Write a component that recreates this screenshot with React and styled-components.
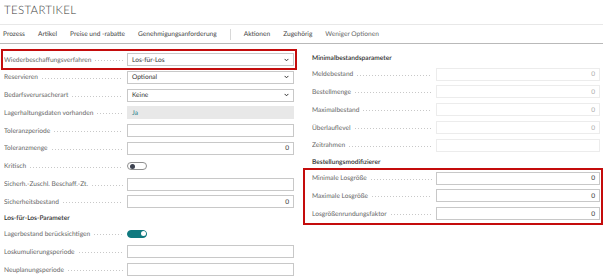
import React from 'react';
import styled, { createGlobalStyle } from 'styled-components';

const Global = createGlobalStyle`
  html, body { margin: 0; padding: 0; background: #fff; }
  body {
    font-family: Lato, "Open Sans", sans-serif;
    color: #333;
    text-rendering: geometricPrecision;
  }
  * { box-sizing: border-box; }
`;

const Page = styled.div`
  width: 605px;
  height: 280px;
  overflow: hidden;
  background: #fff;
`;

const Title = styled.h1`
  margin: 0;
  height: 24px;
  padding: 3px 0 0 4px;
  font-family: Lato, sans-serif;
  font-weight: 300;
  font-size: 11.5px;
  line-height: 15px;
  letter-spacing: 0.3px;
  color: #3a3a3a;
`;

const Nav = styled.nav`
  display: flex;
  align-items: center;
  gap: 13px;
  height: 20px;
  margin-right: 2px;
  padding-left: 3px;
  border-top: 1px solid #e8e8e8;
  border-bottom: 1px solid #b9b9b9;
`;

const NavItem = styled.span`
  font-size: 6.6px;
  color: ${p => (p.$muted ? '#666' : '#444')};
  white-space: nowrap;
`;

const NavSep = styled.span`
  width: 1px;
  height: 11px;
  background: #d8d8d8;
`;

const Columns = styled.div`
  display: grid;
  grid-template-columns: 290px 288px;
  column-gap: 18px;
  padding: 9px 5px 0 4px;
`;

const Column = styled.div`
  display: flex;
  flex-direction: column;
  gap: 4.8px;
`;

const Highlight = styled.div`
  display: flex;
  flex-direction: column;
  gap: 4.8px;
  border: 2px solid #c40c0c;
  padding: ${p => p.$pad};
  margin: ${p => p.$margin};
`;

const Heading = styled.div`
  height: ${p => p.$h}px;
  display: flex;
  align-items: flex-end;
  font-size: 6.6px;
  line-height: 8.4px;
  font-weight: 600;
  color: #2e2e2e;
  white-space: nowrap;
`;

const Row = styled.div`
  display: grid;
  grid-template-columns: ${p => p.$labelW}px 1fr;
  height: 13px;
  align-items: center;
`;

const Label = styled.div`
  display: flex;
  align-items: center;
  padding-right: 4px;
  font-size: 6.6px;
  color: #666;
  white-space: nowrap;
  overflow: hidden;
`;

const Leader = styled.span`
  flex: 1;
  height: 1px;
  margin: 2px 0 0 4px;
  background-image: linear-gradient(to right, #c8c8c8 1px, transparent 1px);
  background-size: 3px 1px;
`;

const Control = styled.div`
  display: flex;
  align-items: center;
`;

const Field = styled.div`
  flex: 1;
  height: 13px;
  display: flex;
  align-items: center;
  justify-content: ${p => (p.$num ? 'flex-end' : 'space-between')};
  padding: 0 4px;
  font-size: 6.6px;
  border: 1px solid ${p => (p.$variant === 'readonly' ? '#ececec' : p.$variant === 'filled' ? '#e8e8e8' : '#c8c8c8')};
  background: ${p => (p.$variant === 'filled' ? '#e8e8e8' : '#fff')};
  color: ${p => (p.$variant === 'readonly' ? '#aaa' : p.$variant === 'filled' ? '#1b7b85' : '#333')};
  white-space: nowrap;
`;

const Toggle = styled.span`
  position: relative;
  display: inline-block;
  width: 20px;
  height: 8px;
  border-radius: 4px;
  border: 1px solid ${p => (p.$on ? '#10797f' : '#8f8f8f')};
  background: ${p => (p.$on ? '#10797f' : '#fff')};
  &::after {
    content: '';
    position: absolute;
    top: 0.5px;
    left: ${p => (p.$on ? '12.5px' : '1.5px')};
    width: 5px;
    height: 5px;
    border-radius: 50%;
    background: ${p => (p.$on ? '#fff' : '#3d4250')};
  }
`;

const Chevron = () => (
  <svg width="5" height="4" viewBox="0 0 5 4">
    <path d="M0.6 0.9 L2.5 2.8 L4.4 0.9" fill="none" stroke="#333" strokeWidth="1" />
  </svg>
);

const FieldRow = ({ label, labelW = 123, children }) => (
  <Row $labelW={labelW}>
    <Label>
      {label}
      <Leader />
    </Label>
    <Control>{children}</Control>
  </Row>
);

const Select = ({ value }) => (
  <Field>
    <span>{value}</span>
    <Chevron />
  </Field>
);

const Input = ({ value, variant, num }) => (
  <Field $variant={variant} $num={num}>
    {value}
  </Field>
);

export default function App() {
  return (
    <Page>
      <Global />
      <Title>TESTARTIKEL</Title>
      <Nav>
        <NavItem>Prozess</NavItem>
        <NavItem>Artikel</NavItem>
        <NavItem>Preise und -rabatte</NavItem>
        <NavItem>Genehmigungsanforderung</NavItem>
        <NavSep />
        <NavItem>Aktionen</NavItem>
        <NavItem>Zugehörig</NavItem>
        <NavItem $muted>Weniger Optionen</NavItem>
      </Nav>
      <Columns>
        <Column>
          <Highlight $pad="2px 1px 1.5px 1px" $margin="-4px -3px -3.5px -3px">
            <FieldRow label="Wiederbeschaffungsverfahren">
              <Select value="Los-für-Los" />
            </FieldRow>
          </Highlight>
          <FieldRow label="Reservieren">
            <Select value="Optional" />
          </FieldRow>
          <FieldRow label="Bedarfsverursacherart">
            <Select value="Keine" />
          </FieldRow>
          <FieldRow label="Lagerhaltungsdaten vorhanden">
            <Input value="Ja" variant="filled" />
          </FieldRow>
          <FieldRow label="Toleranzperiode">
            <Input />
          </FieldRow>
          <FieldRow label="Toleranzmenge">
            <Input value="0" num />
          </FieldRow>
          <FieldRow label="Kritisch">
            <Toggle />
          </FieldRow>
          <FieldRow label="Sicherh.-Zuschl. Beschaff.-Zt.">
            <Input />
          </FieldRow>
          <FieldRow label="Sicherheitsbestand">
            <Input value="0" num />
          </FieldRow>
          <Heading $h={9.5}>Los-für-Los-Parameter</Heading>
          <FieldRow label="Lagerbestand berücksichtigen">
            <Toggle $on />
          </FieldRow>
          <FieldRow label="Loskumulierungsperiode">
            <Input />
          </FieldRow>
          <FieldRow label="Neuplanungsperiode">
            <Input />
          </FieldRow>
        </Column>
        <Column>
          <Heading $h={9.9}>Minimalbestandsparameter</Heading>
          <FieldRow label="Meldebestand" labelW={124}>
            <Input value="0" variant="readonly" num />
          </FieldRow>
          <FieldRow label="Bestellmenge" labelW={124}>
            <Input value="0" variant="readonly" num />
          </FieldRow>
          <FieldRow label="Maximalbestand" labelW={124}>
            <Input value="0" variant="readonly" num />
          </FieldRow>
          <FieldRow label="Überlauflevel" labelW={124}>
            <Input value="0" variant="readonly" num />
          </FieldRow>
          <FieldRow label="Zeitrahmen" labelW={124}>
            <Input variant="readonly" />
          </FieldRow>
          <Heading $h={10.2}>Bestellungsmodifizierer</Heading>
          <Highlight $pad="1.7px 1px 2.7px 7px" $margin="-3.7px -3px -4.7px -9px">
            <FieldRow label="Minimale Losgröße" labelW={124}>
              <Input value="0" num />
            </FieldRow>
            <FieldRow label="Maximale Losgröße" labelW={124}>
              <Input value="0" num />
            </FieldRow>
            <FieldRow label="Losgrößenrundungsfaktor" labelW={124}>
              <Input value="0" num />
            </FieldRow>
          </Highlight>
        </Column>
      </Columns>
    </Page>
  );
}
